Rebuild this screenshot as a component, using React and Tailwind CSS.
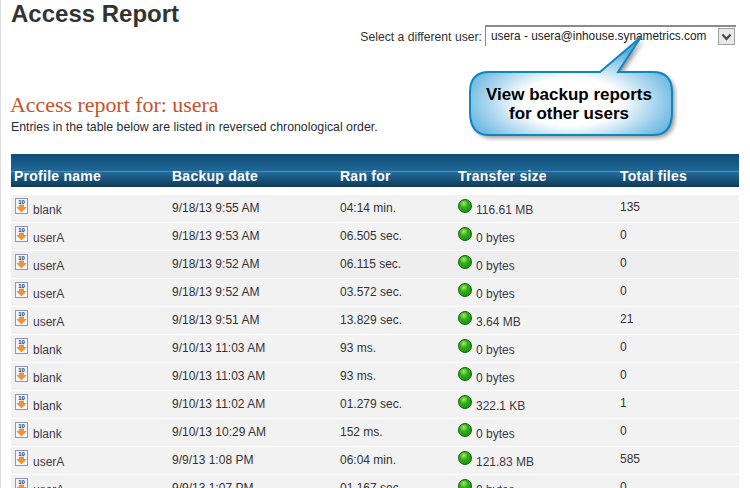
const rows = [
  ["blank", "9/18/13 9:55 AM", "04:14 min.", "116.61 MB", "135"],
  ["userA", "9/18/13 9:53 AM", "06.505 sec.", "0 bytes", "0"],
  ["userA", "9/18/13 9:52 AM", "06.115 sec.", "0 bytes", "0"],
  ["userA", "9/18/13 9:52 AM", "03.572 sec.", "0 bytes", "0"],
  ["userA", "9/18/13 9:51 AM", "13.829 sec.", "3.64 MB", "21"],
  ["blank", "9/10/13 11:03 AM", "93 ms.", "0 bytes", "0"],
  ["blank", "9/10/13 11:03 AM", "93 ms.", "0 bytes", "0"],
  ["blank", "9/10/13 11:02 AM", "01.279 sec.", "322.1 KB", "1"],
  ["blank", "9/10/13 10:29 AM", "152 ms.", "0 bytes", "0"],
  ["userA", "9/9/13 1:08 PM", "06:04 min.", "121.83 MB", "585"],
  ["userA", "9/9/13 1:07 PM", "01.167 sec.", "0 bytes", "0"],
];

const BackupIcon = () => (
  <svg width="13" height="16" viewBox="0 0 13 16" className="shrink-0">
    <rect x="0.5" y="0.5" width="12" height="15" fill="#f4f6fb" stroke="#8c93bd" />
    <text x="6.5" y="6" textAnchor="middle" fontSize="6" fontWeight="700" fill="#333" fontFamily="Liberation Sans, sans-serif">10</text>
    <path d="M4.5 7h4v2.5H11L6.5 14 2 9.5h2.5z" fill="#f0962a" stroke="#c8701a" strokeWidth="0.5" />
  </svg>
);

const Callout = () => (
  <div className="absolute left-[462px] top-[30px] w-[225px] h-[115px]">
    <svg width="225" height="115" viewBox="0 0 225 115" className="absolute inset-0">
      <defs>
        <radialGradient id="bubbleFill" cx="50%" cy="66%" r="58%" gradientUnits="objectBoundingBox">
          <stop offset="42%" stopColor="#ffffff" />
          <stop offset="100%" stopColor="#58aede" />
        </radialGradient>
        <filter id="bubbleShadow" x="-10%" y="-10%" width="125%" height="130%">
          <feGaussianBlur stdDeviation="2" />
        </filter>
      </defs>
      <path d="M26 42H137L178 7 155 42H190Q209 42 209 62V82Q209 105 190 105H26Q7 105 7 82V62Q7 42 26 42Z" fill="#555" opacity="0.6" filter="url(#bubbleShadow)" transform="translate(3 3)" />
      <path d="M26 42H137L178 7 155 42H190Q209 42 209 62V82Q209 105 190 105H26Q7 105 7 82V62Q7 42 26 42Z" fill="url(#bubbleFill)" stroke="#0f86c4" strokeWidth="2" />
    </svg>
    <div className="absolute left-[5px] top-[55px] w-[202px] text-center text-[17px] leading-[19px] font-bold text-black font-['Liberation_Sans',sans-serif]">
      View backup reports
      <br />
      for other users
    </div>
  </div>
);

export default function App() {
  return (
    <div className="relative h-[488px] w-[750px] overflow-hidden bg-white border-l border-[#dcdcdc] font-['Liberation_Sans',sans-serif] text-[12px] text-[#333]">
      <div className="pl-[10px] pr-[14px]">
        <div className="flex justify-between h-[46px]">
          <h1 className="text-[24px] leading-[28px] font-bold text-[#333]">Access Report</h1>
          <div className="flex items-start">
            <span className="mt-[28px] mr-[3px] text-[12.2px]">Select a different user:</span>
            <div className="mt-[25px] flex h-[21px] w-[251px] items-center justify-between border-t-2 border-l border-[#8a8a8a] bg-white pl-[5px] pr-[1px] text-[#222]">
              <span className="whitespace-nowrap text-[11.85px]">usera - usera@inhouse.synametrics.com</span>
              <span className="flex size-[17px] items-center justify-center border border-[#a0a0a0] bg-[#e8e8e8]">
                <svg width="11" height="8" viewBox="0 0 11 8">
                  <path d="M1.5 1.5 5.5 6 9.5 1.5" fill="none" stroke="#4a4a4a" strokeWidth="2.2" />
                </svg>
              </span>
            </div>
          </div>
        </div>
        <h2 className="mt-[47px] -ml-px text-[21.9px] leading-[24px] text-[#c5522a] font-['Liberation_Serif',serif]">Access report for: usera</h2>
        <p className="mt-[3px] leading-[14px] text-[12.33px] text-[#2b2b33]">Entries in the table below are listed in reversed chronological order.</p>

        <div className="mt-[20px] w-[728px]">
          <div className="grid h-[33px] grid-cols-[161px_168px_118px_162px_1fr] items-end bg-[linear-gradient(#0f4c75_0%,#1f6796_50%,#5b9ccb_52%,#236a99_56%,#0e3a58_100%)] pb-[2px] text-[14px] leading-[17px] tracking-[0.25px] font-bold text-white">
            <div className="pl-[3px]">Profile name</div>
            <div>Backup date</div>
            <div>Ran for</div>
            <div>Transfer size</div>
            <div>Total files</div>
          </div>
          <div className="mt-[8px] flex flex-col gap-px">
            {rows.map((r, i) => (
              <div key={i} className={i === 2 ? "grid h-[27px] grid-cols-[161px_168px_118px_162px_1fr] bg-[#eeeeee]" : "grid h-[27px] grid-cols-[161px_168px_118px_162px_1fr] bg-[#f2f2f2]"}>
                <div className="flex items-start pl-[4px] pt-[3px]">
                  <BackupIcon />
                  <span className="ml-[5px] mt-[3px] text-[#3a3a48]">{r[0]}</span>
                </div>
                <div className="pt-[4px]">{r[1]}</div>
                <div className="pt-[4px]">{r[2]}</div>
                <div className="flex items-start pt-[4px]">
                  <span className="size-[14px] shrink-0 rounded-full border border-[#0a5f0a] bg-[radial-gradient(circle_at_40%_30%,#a8ec6a_0%,#35b01a_35%,#0c8a0c_100%)]" />
                  <span className="ml-[4px] mt-[2px] text-[#3a3a48]">{r[3]}</span>
                </div>
                <div className="pt-[3px]">{r[4]}</div>
              </div>
            ))}
          </div>
        </div>
      </div>
      <Callout />
    </div>
  );
}
